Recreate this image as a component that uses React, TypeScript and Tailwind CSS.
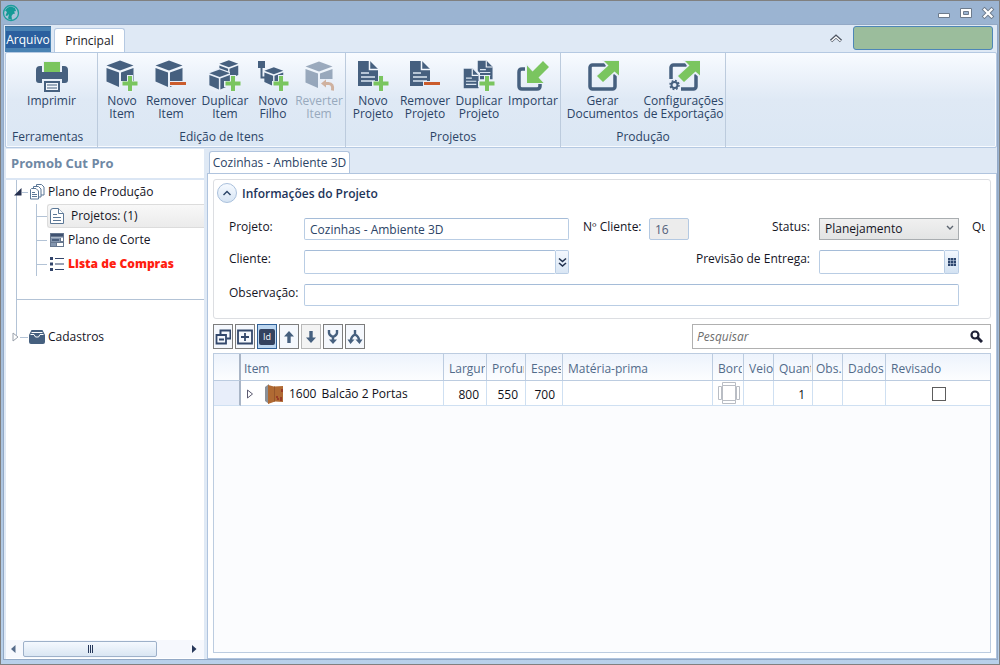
import React, { useState } from 'react'

const DARK = '#46607f'
const GREEN = '#7ac55f'
const ORANGE = '#cb5c2c'
const HALO = '#e8eff9'

const Icon: React.FC<{ children: React.ReactNode; className?: string }> = ({ children, className }) => (
  <svg viewBox="0 0 32 32" width="32" height="32" className={className} aria-hidden="true">
    {children}
  </svg>
)

const Cube = ({ transform }: { transform?: string }) => (
  <g fill={DARK} transform={transform}>
    <path d="M14 0.500 27.500 5.500 14 10.500 0.500 5.500z" />
    <path d="M0.500 8 13 12.500V27L0.500 21.500z" />
    <path d="M15 12.500 27.500 8v13.500L15 27z" />
  </g>
)

const Plus = () => (
  <>
    <path d="M21 15h6v6h5v6h-5v5h-6v-5h-6v-6h6z" fill={HALO} />
    <path d="M22 16h4v5.500h5.500v4H26V31h-4v-5.500h-5.500v-4H22z" fill={GREEN} />
  </>
)

const Minus = () => (
  <>
    <path d="M14 21h18v5H14z" fill={HALO} />
    <path d="M15 22h16v3H15z" fill={ORANGE} />
  </>
)

const Doc = ({ transform }: { transform?: string }) => (
  <g transform={transform}>
    <path d="M1 1h12l8 8v17H1z" fill={DARK} />
    <path d="M12.500 1v8.500H21" fill="none" stroke="#f4f8fd" strokeWidth="1.500" />
    <path d="M4 13h8M4 17h14M4 21h14" stroke="#dbe6f2" strokeWidth="1.400" />
  </g>
)

const OutArrow = () => (
  <>
    <path d="M15 0h17v18l-5-4L16 24l-8-8 11-10z" fill={HALO} />
    <path d="M17 1h15v14.500l-4.500-4L16 22l-6-6L21.500 5.500z" fill={GREEN} />
  </>
)

const PrinterIcon = () => (
  <Icon>
    <path d="M0 10q0-4 4-4h2v6h20V6h2q4 0 4 4v10q0 3-3 3h-3v-4H6v4H3q-3 0-3-3z" fill={DARK} />
    <path d="M7 1h18v11H7z" fill={HALO} />
    <path d="M8 2h16v10H8z" fill={GREEN} />
    <path d="M7 20h18v12H7z" fill={HALO} />
    <path d="M9 22h14v9H9z" fill="#f2f6fc" stroke={DARK} strokeWidth="2" />
    <path d="M11 25h10M11 28h10" stroke={DARK} strokeWidth="1.200" />
  </Icon>
)
const NewItemIcon = () => <Icon><Cube /><Plus /></Icon>
const RemoveItemIcon = () => <Icon><Cube /><Minus /></Icon>
const CopyItemIcon = () => (
  <Icon>
    <Cube transform="translate(10 0) scale(.7)" />
    <path d="M-1 13 10 8l11 4v16l-11 5-11-4z" fill={HALO} />
    <Cube transform="translate(0 9) scale(.76)" />
    <Plus />
  </Icon>
)
const ChildItemIcon = () => (
  <Icon>
    <path d="M1 1h7v7H1z" fill={DARK} />
    <path d="M4.500 8v9.500H8" fill="none" stroke={DARK} strokeWidth="2" />
    <Cube transform="translate(7 7) scale(.7)" />
    <Plus />
  </Icon>
)
const RevertIcon = () => (
  <Icon className="opacity-50">
    <Cube transform="translate(2 1)" />
    <path d="M17 19h15v13H17z" fill={HALO} />
    <path d="M20 23.500h5.500q5 0 4 7" fill="none" stroke="#b9764a" strokeWidth="3" />
    <path d="M23 19.500v8l-5-4z" fill="#b9764a" />
  </Icon>
)
const NewProjectIcon = () => <Icon><Doc /><Plus /></Icon>
const RemoveProjectIcon = () => <Icon><Doc /><Minus /></Icon>
const CopyProjectIcon = () => (
  <Icon>
    <Doc transform="translate(14 0) scale(.74)" />
    <path d="M0 8h11l6 5v16H0z" fill={HALO} />
    <Doc transform="translate(0 8) scale(.74 .78)" />
    <Plus />
  </Icon>
)
const ImportIcon = () => (
  <Icon>
    <path d="M8 9H5q-3 0-3 3v14q0 3 3 3h15q3 0 3-3v-3" fill="none" stroke={DARK} strokeWidth="3.500" />
    <path d="M9 3v21h19l-5-6.500z" fill={HALO} />
    <path d="M10 5.500V23h16.500l-5-5.500L32 7l-6-6-10.500 10.500z" fill={GREEN} />
  </Icon>
)
const ExportIcon = () => (
  <Icon>
    <rect x="3" y="5" width="25" height="24" rx="2.500" fill="none" stroke={DARK} strokeWidth="3.500" />
    <OutArrow />
  </Icon>
)
const ExportConfigIcon = () => (
  <Icon>
    <rect x="3" y="5" width="25" height="24" rx="2.500" fill="none" stroke={DARK} strokeWidth="3.500" />
    <OutArrow />
    <path d="M0 19h10l3 4v9H0z" fill={HALO} />
    <circle cx="6.500" cy="25" r="3" fill="none" stroke={DARK} strokeWidth="2" />
    <circle cx="6.500" cy="25" r="4.500" fill="none" stroke={DARK} strokeWidth="1.500" strokeDasharray="1.800 1.730" />
  </Icon>
)

interface Tool {
  label: string[];
  icon: React.FC;
  width: string;
  disabled?: boolean;
}

const groups: { title: string; tools: Tool[]; className: string }[] = [
  {
    title: 'Ferramentas',
    className: 'w-[92px]',
    tools: [{ label: ['Imprimir'], icon: PrinterIcon, width: 'w-20' }],
  },
  {
    title: 'Edição de Itens',
    className: 'w-[248px]',
    tools: [
      { label: ['Novo', 'Item'], icon: NewItemIcon, width: 'w-[46px]' },
      { label: ['Remover', 'Item'], icon: RemoveItemIcon, width: 'w-[52px]' },
      { label: ['Duplicar', 'Item'], icon: CopyItemIcon, width: 'w-[56px]' },
      { label: ['Novo', 'Filho'], icon: ChildItemIcon, width: 'w-[40px]' },
      { label: ['Reverter', 'Item'], icon: RevertIcon, width: 'w-[52px]', disabled: true },
    ],
  },
  {
    title: 'Projetos',
    className: 'w-[215px]',
    tools: [
      { label: ['Novo', 'Projeto'], icon: NewProjectIcon, width: 'w-[52px]' },
      { label: ['Remover', 'Projeto'], icon: RemoveProjectIcon, width: 'w-[52px]' },
      { label: ['Duplicar', 'Projeto'], icon: CopyProjectIcon, width: 'w-[56px]' },
      { label: ['Importar'], icon: ImportIcon, width: 'w-[52px]' },
    ],
  },
  {
    title: 'Produção',
    className: 'w-[165px]',
    tools: [
      { label: ['Gerar', 'Documentos'], icon: ExportIcon, width: 'w-20' },
      { label: ['Configurações', 'de Exportação'], icon: ExportConfigIcon, width: 'w-20' },
    ],
  },
]

const TitleBar = () => (
  <header className="flex h-[23px] items-center justify-between pl-px pr-1">
    <svg viewBox="0 0 18 18" width="18" height="18" aria-hidden="true">
      <circle cx="9" cy="9" r="7.500" fill="#a9c3d8" stroke="#1d9d9c" strokeWidth="1.300" />
      <path d="M3 6.500Q5 3 9 2.500l4 1.500 1 3-2 .5 1 2-2 .5-1.500 2 .5 4-4-1.500L7 10l-2 2-1.500-.5L5 8z" fill="#139a96" />
    </svg>
    <div className="flex items-center gap-2">
      <button aria-label="Minimizar">
        <svg viewBox="0 0 14 14" width="14" height="14"><path d="M1.500 7.500h11v4h-11z" fill="#fff" stroke="#6d7b8c" /></svg>
      </button>
      <button aria-label="Maximizar">
        <svg viewBox="0 0 14 14" width="14" height="14">
          <path d="M1.500 2.500h11v9h-11z" fill="#fff" stroke="#6d7b8c" />
          <path d="M4.500 5.500h5v3h-5z" fill="#9bb4d2" stroke="#6d7b8c" />
        </svg>
      </button>
      <button aria-label="Fechar">
        <svg viewBox="0 0 14 14" width="14" height="14">
          <path d="M3.500 3.500l7 7M10.500 3.500l-7 7" stroke="#6d7b8c" strokeWidth="4" strokeLinecap="square" />
          <path d="M3.500 3.500l7 7M10.500 3.500l-7 7" stroke="#fff" strokeWidth="2.200" strokeLinecap="square" />
        </svg>
      </button>
    </div>
  </header>
)

const Ribbon = () => (
  <>
    <nav className="flex h-[27px] items-end pr-1">
      <button className="h-[26px] w-[46px] border-t border-[#3d6f9c] bg-[#4a83b4] text-white">
        <span className="bg-[#2b5f9e]">Arquivo</span>
      </button>
      <button className="ml-[3px] h-6 w-[71px] rounded-t-[3px] border border-b-0 border-[#b5c9e2] bg-white text-[#1c1c28]">
        Principal
      </button>
      <button aria-label="Recolher faixa" className="ml-auto mr-[10px] self-center">
        <svg viewBox="0 0 14 10" width="14" height="10">
          <path d="M2 7l5-4.500L12 7" fill="none" stroke="#4e5664" strokeWidth="3.200" />
          <path d="M2.500 7L7 3l4.500 4" fill="none" stroke="#fff" strokeWidth="1.400" />
        </svg>
      </button>
      <div className="mb-[2px] h-6 w-[140px] rounded-[3px] border border-[#4d86b8] bg-[#9bbd9c]"></div>
    </nav>
    <section className="flex h-24 rounded-[2px] border border-[#b5c9e2] bg-linear-to-b from-[#f8fbff] via-[#dfe9f5] to-[#dbe7f4] shadow-[inset_0_0_0_1px_#f8fbff]">
      {groups.map((group) => (
        <div key={group.title} className={`flex flex-col border-r border-[#bccbdd] px-px ${group.className}`}>
          <div className="flex flex-1 pt-[7px]">
            {group.tools.map((tool, index) => (
              <button
                key={index}
                disabled={tool.disabled}
                className={`flex shrink-0 grow flex-col items-center whitespace-nowrap leading-[13px] text-[#2b4466] disabled:text-[#98a9bd] ${tool.width}`}
              >
                <tool.icon />
                <span className="flex flex-col pt-[2px]">
                  {tool.label.map((line) => (
                    <span key={line}>{line}</span>
                  ))}
                </span>
              </button>
            ))}
          </div>
          <h2 className={`h-[18px] leading-[16px] text-[#2b4466] ${group.tools.length > 1 ? 'text-center' : 'pl-[5px]'}`}>
            {group.title}
          </h2>
        </div>
      ))}
    </section>
  </>
)

const Elbow = ({ className }: { className: string }) => (
  <span className={`h-px shrink-0 bg-[#b3c3d6] ${className}`}></span>
)

const Sidebar = () => (
  <aside className="ml-px flex w-[198px] shrink-0 flex-col bg-white">
    <h1 className="h-[31px] border-b-2 border-[#dbe6f4] pl-[5px] text-[13px] font-bold leading-7 text-[#6f88a4]">Promob Cut Pro</h1>
    <div className="ml-[10px] flex-1 text-[#15151f]">
      <ul className="border-l border-[#b3c3d6]">
        <li>
          <div className="relative flex h-6 items-center">
            <svg viewBox="0 0 8 8" width="8" height="8" className="absolute -left-[3px]"><path d="M7.500 0v7.500H0z" fill="#26304f" /></svg>
            <Elbow className="ml-[5px] w-[6px]" />
            <svg viewBox="0 0 16 16" width="16" height="16" className="ml-px mr-[3px]" fill="#fff" stroke="#5b7796">
              <path d="M7.500 .5h5l2.500 2.500v8h-7.500z" />
              <path d="M4.500 2.500h5l2.500 2.500v8H4.500z" />
              <path d="M1.500 5.500l1-1H7l2.500 2.500v8H1.500z" />
              <path d="M3 8.500h3M3 10.500h5M3 12.500h5" />
            </svg>
            <a href="#plano">Plano de Produção</a>
          </div>
          <ul className="ml-[19px] border-l border-[#b3c3d6]">
            <li className="flex h-6 items-center">
              <Elbow className="w-[10px]" />
              <div className="flex h-6 flex-1 items-center gap-[7px] rounded-l-[3px] border border-r-0 border-[#dcdcdc] bg-linear-to-b from-[#f8f8f8] to-[#ebebeb] pl-[2px]">
                <svg viewBox="0 0 14 16" width="14" height="16" fill="#fff" stroke="#5b7796">
                  <path d="M.5 3q0-2.500 2.500-2.500h5.500l5 5v10H.5z" />
                  <path d="M8.500 .5v5h5M3 6.500h4M3 9.500h8M3 12.500h8" />
                </svg>
                <a href="#projetos">Projetos: (1)</a>
              </div>
            </li>
            <li className="flex h-6 items-center">
              <Elbow className="w-[10px]" />
              <svg viewBox="0 0 14 14" width="14" height="14" className="ml-[3px] mr-1">
                <path d="M0 0h14v14H0z" fill="#66778f" />
                <path d="M1 1h12v2H1z" fill="#3f5170" />
                <path d="M1 4h12v1H1z" fill="#aab7c8" />
                <path d="M1 5h9v4H1zM1 10h5v3H1z" fill="#8496af" />
                <path d="M2 6h7v2H2z" fill="#4d617f" />
                <path d="M11 5h2v3h-2zM7 10h6v3H7z" fill="#fff" />
              </svg>
              <a href="#corte">Plano de Corte</a>
            </li>
            <li className="flex h-6 items-center">
              <Elbow className="w-[10px]" />
              <svg viewBox="0 0 14 14" width="14" height="14" className="ml-[3px] mr-1" fill="#33456b">
                <path d="M0 0h3v3H0zM0 5.500h3v3H0zM0 11h3v3H0zM5 1h9v1H5zM5 6.500h9v1H5zM5 12h9v1H5z" />
              </svg>
              <a href="#compras" className="font-extrabold text-[#ff1e10]">Lista de Compras</a>
            </li>
          </ul>
          <div className="h-6 border-b border-[#b3c3d6]"></div>
          <div className="h-[25px]"></div>
        </li>
      </ul>
      <div className="relative flex h-6 items-center">
        <span className="h-3 w-px self-start bg-[#b3c3d6]"></span>
        <svg viewBox="0 0 8 10" width="8" height="10" className="absolute -left-1"><path d="M1 1l5 4-5 4z" fill="#fff" stroke="#9aa1ab" /></svg>
        <Elbow className="ml-[3px] w-2" />
        <svg viewBox="0 0 16 14" width="16" height="14" className="ml-px mr-[3px]">
          <path d="M2 1q0-1 1-1h10q1 0 1 1l2 4v7q0 2-2 2H2q-2 0-2-2V5z" fill="#46607f" />
          <path d="M2.500 2.500h11M1.500 4.500H5L6.500 7h3L11 4.500h3.500" fill="none" stroke="#fff" />
        </svg>
        <a href="#cadastros">Cadastros</a>
      </div>
    </div>
    <div className="mb-px flex h-[18px] items-center bg-[#f6f8fd] pl-[5px] pr-[7px]">
      <button aria-label="Rolar para a esquerda"><svg viewBox="0 0 5 8" width="5" height="8"><path d="M4.500 0v8L0 4z" fill="#566c8b" /></svg></button>
      <div className="ml-[7px] flex h-4 w-[134px] items-center justify-center gap-px rounded-[2px] border border-[#9db0c9] bg-linear-to-b from-[#f4f8fe] to-[#dae6f3]">
        <i className="h-2 w-px bg-[#26375a]"></i>
        <i className="h-2 w-px bg-[#26375a]"></i>
        <i className="h-2 w-px bg-[#26375a]"></i>
      </div>
      <button aria-label="Rolar para a direita" className="ml-auto"><svg viewBox="0 0 5 8" width="5" height="8"><path d="M0 0v8l4.500-4z" fill="#26375a" /></svg></button>
    </div>
  </aside>
)

const field = 'rounded-[2px] border border-[#b9cde4] border-t-[#a5bcd8] bg-white px-[5px] text-[#2b4466] outline-none'

const ProjectForm = () => {
  const [project, setProject] = useState<string>('Cozinhas - Ambiente 3D')
  const [status, setStatus] = useState<string>('Planejamento')

  return (
    <fieldset className="rounded-[3px] border border-[#dcdee2] pb-3 pl-[15px] pr-[5px]">
      <div className="-ml-3 flex h-[38px] gap-[5px] pt-[3px]">
        <button aria-label="Recolher" className="flex size-5 items-center justify-center rounded-full border border-[#a9c0dc] bg-linear-to-b from-[#f6faff] to-[#d6e4f3]">
          <svg viewBox="0 0 10 6" width="10" height="6"><path d="M1.500 5L5 1.500 8.500 5" fill="none" stroke="#2b4466" strokeWidth="1.400" /></svg>
        </button>
        <h3 className="font-semibold leading-[22px] text-[#1d3459]">Informações do Projeto</h3>
      </div>
      <div className="grid grid-cols-[75px_265px_minmax(210px,1fr)_140px_26px] gap-y-[10px] text-[#15151f]">
        <label htmlFor="projeto" className="leading-[18px]">Projeto:</label>
        <input id="projeto" value={project} onChange={(e) => setProject(e.target.value)} className={`h-[22px] ${field}`} />
        <div className="flex justify-between pl-[14px] pr-[9px]">
          <div className="flex">
            <label htmlFor="cliente-num" className="w-[66px] whitespace-nowrap leading-[18px]">Nº Cliente:</label>
            <input id="cliente-num" disabled defaultValue="16" className="h-[22px] w-10 rounded-[2px] border border-[#b4c9e2] bg-[#ececec] px-[5px] text-[#51607a]" />
          </div>
          <label htmlFor="status" className="leading-[18px]">Status:</label>
        </div>
        <div className="grid">
          <select
            id="status"
            value={status}
            onChange={(e) => setStatus(e.target.value)}
            className="col-start-1 row-start-1 h-[22px] appearance-none border border-[#a9adb0] bg-linear-to-b from-[#f0f0f0] to-[#e3e4e4] px-[5px] text-[#15151f]"
          >
            <option>Planejamento</option>
            <option>Produção</option>
          </select>
          <svg viewBox="0 0 8 6" width="8" height="6" className="pointer-events-none col-start-1 row-start-1 mr-[5px] mt-[7px] justify-self-end">
            <path d="M1 1l3 3 3-3" fill="none" stroke="#5d6570" strokeWidth="1.400" />
          </svg>
        </div>
        <span className="overflow-hidden whitespace-nowrap pl-[13px] leading-[18px]">Qu</span>

        <label htmlFor="cliente" className="leading-[18px]">Cliente:</label>
        <div className="flex h-6">
          <input id="cliente" className={`min-w-0 flex-1 ${field}`} />
          <button aria-label="Escolher cliente" className="flex w-[13px] items-center justify-center rounded-r-[2px] border border-l-0 border-[#b9cde4] bg-linear-to-b from-[#f4f8fe] to-[#d9e6f4]">
            <svg viewBox="0 0 9 11" width="9" height="11"><path d="M1 1.500l3.500 3L8 1.500M1 6l3.500 3L8 6" fill="none" stroke="#22324f" strokeWidth="1.600" /></svg>
          </button>
        </div>
        <label htmlFor="entrega" className="pr-[9px] text-right leading-[18px]">Previsão de Entrega:</label>
        <div className="flex h-6">
          <input id="entrega" className={`min-w-0 flex-1 ${field}`} />
          <button aria-label="Abrir calendário" className="flex w-[14px] items-center justify-center rounded-r-[2px] border border-l-0 border-[#b9cde4] bg-linear-to-b from-[#f4f8fe] to-[#d3e2f2]">
            <svg viewBox="0 0 8 8" width="8" height="8">
              <path d="M0 0h8v8H0z" fill="#2c456d" />
              <path d="M0 2.500h8M0 5.500h8M2.500 0v8M5.500 0v8" stroke="#c3d0e2" strokeWidth=".6" />
            </svg>
          </button>
        </div>
        <span></span>

        <label htmlFor="obs" className="leading-[18px]">Observação:</label>
        <input id="obs" className={`col-span-3 h-[22px] ${field}`} />
      </div>
    </fieldset>
  )
}

const toolbar: { name: string; style: string; icon: React.ReactNode }[] = [
  {
    name: 'Recolher tudo',
    style: 'border-[#7d7d7d] bg-[#f5f8fd]',
    icon: (
      <>
        <path d="M5.500 5.500V1.500h10v8h-4" fill="none" stroke="#33486c" strokeWidth="2" />
        <path d="M1.500 6h9.500v8.500H1.500zM4 10.500h5" fill="none" stroke="#33486c" strokeWidth="1.800" />
      </>
    ),
  },
  {
    name: 'Expandir tudo',
    style: 'border-[#7d7d7d] bg-[#f5f8fd]',
    icon: <path d="M1 1.500h14v13H1zM4 8h8M8 4v8" fill="none" stroke="#33486c" strokeWidth="1.800" />,
  },
  {
    name: 'Mostrar Id',
    style: 'border-[#2f5f96] bg-[#bcd6f0]',
    icon: null,
  },
  {
    name: 'Mover para cima',
    style: 'border-[#7d7d7d] bg-[#f5f8fd]',
    icon: <path d="M8 2l5 5.500H9.700V14H6.300V7.500H3z" fill="#46607f" />,
  },
  {
    name: 'Mover para baixo',
    style: 'border-[#b9b9b9] bg-[#f3f3f3]',
    icon: <path d="M8 14l5-5.500H9.700V2H6.300v6.500H3z" fill="#46607f" />,
  },
  {
    name: 'Agrupar',
    style: 'border-[#7d7d7d] bg-[#f5f8fd]',
    icon: (
      <>
        <path d="M4 1v3q0 2 4 4 4-2 4-4V1M8 7v6" fill="none" stroke="#46607f" strokeWidth="2.400" />
        <path d="M4 10.500h8L8 15z" fill="#46607f" />
      </>
    ),
  },
  {
    name: 'Desagrupar',
    style: 'border-[#7d7d7d] bg-[#f5f8fd]',
    icon: (
      <>
        <path d="M8 1v5M8 5.500q-4 2-4 6M8 5.500q4 2 4 6" fill="none" stroke="#46607f" strokeWidth="2.400" />
        <path d="M0.500 10.500h7L3.500 15zM8.500 10.500h7L12.500 15z" fill="#46607f" />
      </>
    ),
  },
]

const Toolbar = () => (
  <div className="mt-[5px] flex h-[25px] gap-[2px]">
    {toolbar.map((tool) => (
      <button key={tool.name} aria-label={tool.name} className={`flex w-5 shrink-0 items-center justify-center border ${tool.style}`}>
        {tool.icon ? (
          <svg viewBox="0 0 16 16" width="16" height="16">{tool.icon}</svg>
        ) : (
          <span className="size-4 rounded-[2px] bg-[#33425f] text-[9px] leading-4 text-white">Id</span>
        )}
      </button>
    ))}
    <div className="ml-auto flex w-[299px] items-center border border-[#b0b0b0] bg-white pr-[7px]">
      <input aria-label="Pesquisar" placeholder="Pesquisar" className="min-w-0 flex-1 px-1 italic outline-none placeholder:text-[#6e6e6e]" />
      <svg viewBox="0 0 13 13" width="13" height="13" aria-hidden="true">
        <circle cx="5" cy="5" r="3.500" fill="none" stroke="#1f2136" strokeWidth="2.200" />
        <path d="M7.500 7.500l4.500 4.500" stroke="#1f2136" strokeWidth="3" />
      </svg>
    </div>
  </div>
)

const columns: { title: string; style: string }[] = [
  { title: 'Item', style: 'w-[203px] pl-[3px]' },
  { title: 'Largura', style: 'w-[43px] pl-[5px] pr-px' },
  { title: 'Profundidade', style: 'w-[39px] pl-[5px] pr-px' },
  { title: 'Espessura', style: 'w-[37px] pl-[5px] pr-px' },
  { title: 'Matéria-prima', style: 'w-[150px] pl-[5px]' },
  { title: 'Borda', style: 'w-[31px] pl-[5px] pr-px' },
  { title: 'Veio', style: 'w-[30px] pl-[5px]' },
  { title: 'Quantidade', style: 'w-[39px] pl-[5px] pr-px' },
  { title: 'Obs.', style: 'w-[30px] pl-[3px]' },
  { title: 'Dados', style: 'w-[43px] pl-[5px]' },
  { title: 'Revisado', style: 'pl-[5px]' },
]

const ItemsTable = () => {
  const [reviewed, setReviewed] = useState<boolean>(false)
  const cell = 'border-r border-[#cfe0f2] text-right'

  return (
    <div className="mt-1 flex-1 border border-[#bccce0] bg-[#fbfcfe]">
      <table className="w-full table-fixed border-separate border-spacing-0">
        <thead>
          <tr className="h-[27px] bg-linear-to-b from-[#edf3fc] to-[#fdfeff] text-left text-[#526b8a]">
            <th className="w-[27px] border-b border-r-2 border-[#a9b5c6] border-b-[#bccce0]"></th>
            {columns.map((column) => (
              <th key={column.title} className={`border-b border-r border-[#bccce0] pt-1 font-normal last:border-r-0 ${column.style}`}>
                <div className="overflow-hidden whitespace-nowrap">{column.title}</div>
              </th>
            ))}
          </tr>
        </thead>
        <tbody>
          <tr className="h-[25px] bg-white text-[#101018] [&>td]:border-b [&>td]:border-b-[#cfe0f2]">
            <td className="border-r-2 border-[#a9b5c6] bg-[#e8eefa]"></td>
            <td className="border-r border-[#cfe0f2]">
              <div className="flex items-center whitespace-nowrap pl-[5px] pt-[2px]">
                <button aria-label="Expandir item">
                  <svg viewBox="0 0 8 10" width="8" height="10"><path d="M1.500 1l5 4-5 4z" fill="#fff" stroke="#5b5a70" /></svg>
                </button>
                <svg viewBox="0 0 20 20" width="20" height="20" className="ml-[10px] mr-[5px]" aria-hidden="true">
                  <path d="M1 3l4-3v20l-4-3z" fill="#8b9097" />
                  <path d="M4 1l6 1.500 9-.5v16l-8-.5L4 20z" fill="#b06a33" />
                  <path d="M10.500 2.500v15" stroke="#96562b" />
                  <path d="M13 12v2M14 14v2M18 5v3M17 13v4" stroke="#8b2020" strokeWidth="1.200" />
                </svg>
                <span className="flex gap-[5px]"><span>1600</span><span>Balcão 2 Portas</span></span>
              </div>
            </td>
            <td className={`pr-[7px] pt-[3px] ${cell}`}>800</td>
            <td className={`pr-[7px] pt-[3px] ${cell}`}>550</td>
            <td className={`pr-[7px] pt-[3px] ${cell}`}>700</td>
            <td className={cell}></td>
            <td className={cell}>
              <svg viewBox="0 0 22 22" width="22" height="22" className="ml-[5px]" fill="#fff" stroke="#b9bdc4">
                <path d="M4.500 3.500h13v15h-13zM4.500 .5h13v3h-13zM4.500 18.500h13v3h-13zM.5 4.500h3v13h-3zM18.500 4.500h3v13h-3z" />
              </svg>
            </td>
            <td className={cell}></td>
            <td className={`pr-[7px] pt-[3px] ${cell}`}>1</td>
            <td className={cell}></td>
            <td className={cell}></td>
            <td className="pl-[2px] pt-px">
              <input
                type="checkbox"
                aria-label="Revisado"
                checked={reviewed}
                onChange={() => setReviewed(!reviewed)}
                className="mx-auto block size-[14px] appearance-none border border-[#5d5d5d] bg-white checked:bg-[#46607f]"
              />
            </td>
          </tr>
        </tbody>
      </table>
    </div>
  )
}

const App: React.FC = () => {
  return (
    <div className="flex min-h-screen flex-col border border-[#808080] bg-linear-to-b from-[#9bb4d2] from-30% to-[#b8d0ea] font-['Open_Sans','Noto_Sans',sans-serif] text-[12px] leading-4">
      <TitleBar />
      <div className="mb-1 ml-[2px] mr-px flex flex-1 flex-col border border-[#93a9c6] bg-[#dfe9f5] pl-px">
        <Ribbon />
        <div className="flex flex-1 pt-px">
          <Sidebar />
          <main className="ml-[3px] flex min-w-0 flex-1 flex-col">
            <div className="flex h-6 items-end">
              <button className="-mb-px ml-[2px] h-[23px] w-[141px] whitespace-nowrap rounded-t-[3px] border border-b-0 border-[#b0c4de] bg-white text-[#2b4466]">
                Cozinhas - Ambiente 3D
              </button>
            </div>
            <div className="flex flex-1 flex-col border border-[#b0c4de] bg-white px-[5px] pb-[5px] pt-[5px]">
              <ProjectForm />
              <Toolbar />
              <ItemsTable />
            </div>
          </main>
        </div>
      </div>
    </div>
  )
}

export default App
